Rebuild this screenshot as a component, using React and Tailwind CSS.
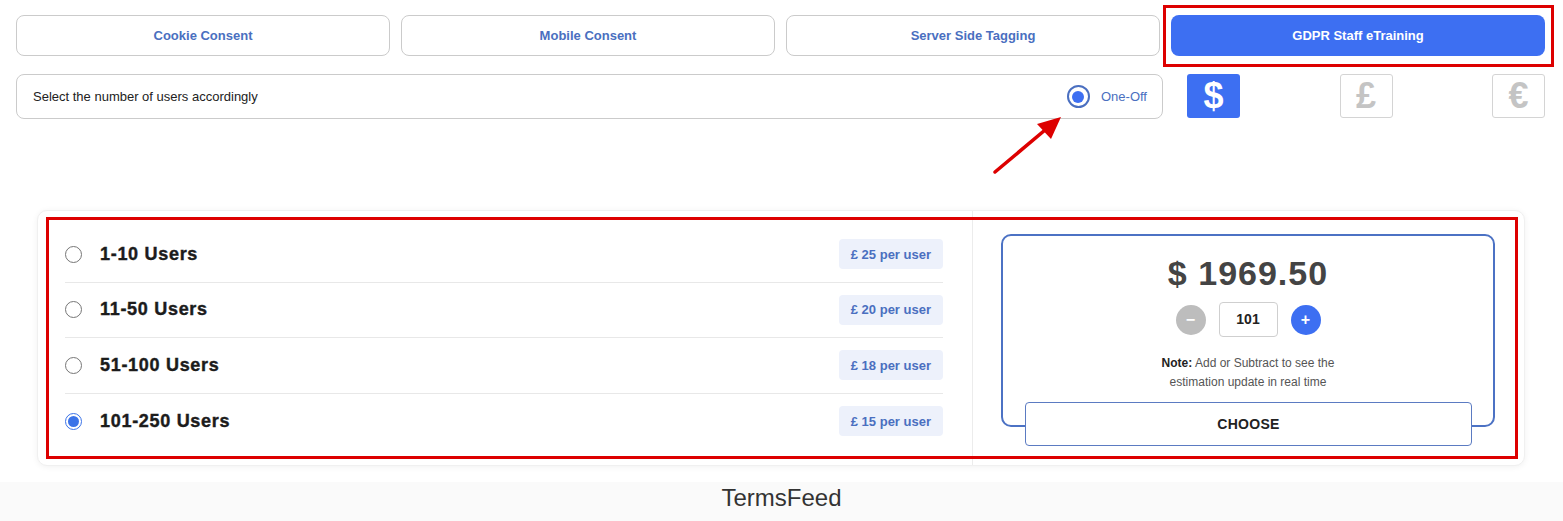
import React, { useState } from 'react';

const tabs = ['Cookie Consent', 'Mobile Consent', 'Server Side Tagging', 'GDPR Staff eTraining'];

const tiers = [
  { label: '1-10 Users', price: 25 },
  { label: '11-50 Users', price: 20 },
  { label: '51-100 Users', price: 18 },
  { label: '101-250 Users', price: 15 },
];

const Radio = ({ checked }) => (
  <span
    className={`flex h-[17px] w-[17px] items-center justify-center rounded-full border ${
      checked ? 'border-[#3b73e8]' : 'border-[#767676]'
    }`}
  >
    {checked && <span className="h-[11px] w-[11px] rounded-full bg-[#3b73e8]" />}
  </span>
);

const App = () => {
  const [selected, setSelected] = useState(3);
  const [qty, setQty] = useState(101);
  const total = (qty * 19.5).toFixed(2);

  return (
    <div className="relative min-h-[521px] bg-white font-['Liberation_Sans',Arial,sans-serif]">
      <div className="px-4 pt-[15px]">
        {/* tabs */}
        <div className="grid w-[1529px] grid-cols-4 gap-[11px]">
          {tabs.map((t, i) => (
            <div key={t} className="relative">
              <button
                className={`flex h-[41px] w-full items-center justify-center rounded-lg text-[13px] font-bold ${
                  i === 3
                    ? 'bg-[#3d6ff2] text-white'
                    : 'border border-[#cbcbcb] bg-white text-[#4a6fc0]'
                }`}
              >
                {t}
              </button>
              {i === 3 && (
                <div className="pointer-events-none absolute -bottom-[11px] -left-2 -right-[9px] -top-[10px] border-[3px] border-[#dd0000]" />
              )}
            </div>
          ))}
        </div>

        {/* users row + currencies */}
        <div className="mt-[18px] flex">
          <div className="flex h-[45px] w-[1147px] items-center justify-between rounded-lg border border-[#cbcbcb] pl-4 pr-[15px]">
            <span className="text-[13px] text-[#222]">Select the number of users accordingly</span>
            <label className="flex items-center gap-[11px]">
              <span className="flex h-[23px] w-[23px] items-center justify-center rounded-full border-2 border-[#4a6fc0]">
                <span className="h-[12px] w-[12px] rounded-full bg-[#3d6ff2]" />
              </span>
              <span className="text-[13px] text-[#4a6fc0]">One-Off</span>
            </label>
          </div>
          <div className="ml-[24px] flex flex-1 justify-between pr-[2px]">
            <div className="flex h-[44px] w-[53px] items-center justify-center rounded-[3px] bg-[#3d6ff2] text-[36px] font-bold text-white">
              $
            </div>
            <div className="flex h-[44px] w-[53px] items-center justify-center rounded-[3px] border border-[#d4d4d4] text-[36px] font-bold text-[#c4c4c4]">
              £
            </div>
            <div className="flex h-[44px] w-[53px] items-center justify-center rounded-[3px] border border-[#d4d4d4] text-[36px] font-bold text-[#c4c4c4]">
              €
            </div>
          </div>
        </div>
      </div>

      {/* annotation arrow */}
      <svg className="pointer-events-none absolute left-[985px] top-[110px]" width="90" height="70" viewBox="0 0 90 70">
        <line x1="10" y1="62" x2="66" y2="15" stroke="#dd0000" strokeWidth="3.5" strokeLinecap="round" />
        <polygon points="76,7 52,14 66,29" fill="#dd0000" />
      </svg>

      {/* pricing card */}
      <div className="relative mx-[37px] mr-[38px] mt-[91px] flex rounded-[10px] border border-[#f0f0f0] bg-white shadow-[0_1px_6px_rgba(0,0,0,0.06)]">
        <div className="w-[935px] border-r border-[#ececec] pb-[16px] pl-[27px] pr-[29px] pt-[16px]">
          {tiers.map((t, i) => (
            <div
              key={t.label}
              onClick={() => setSelected(i)}
              className={`flex h-[55.5px] cursor-pointer items-center justify-between ${
                i < tiers.length - 1 ? 'border-b border-[#e8e8e8]' : ''
              }`}
            >
              <div className="flex items-center gap-[18px]">
                <Radio checked={selected === i} />
                <span className="text-[18px] font-bold tracking-[0.7px] text-[#1c1c1c] [-webkit-text-stroke:0.4px_#1c1c1c]">
                  {t.label}
                </span>
              </div>
              <span className="flex h-[30px] items-center rounded-[4px] bg-[#edf1fb] px-3 text-[13px] font-bold text-[#4a6fc0]">
                £ {t.price} per user
              </span>
            </div>
          ))}
        </div>

        <div className="flex-1 pl-[28px] pr-[29px] pt-[23px]">
          <div className="relative flex h-[193px] flex-col items-center rounded-[10px] border-2 border-[#4c72c4] pt-[20px]">
            <div className="text-[34px] font-bold leading-none tracking-[1px] text-[#444]">$ {total}</div>
            <div className="mt-[12px] flex items-center gap-[13px]">
              <button
                onClick={() => setQty(Math.max(101, qty - 1))}
                className="flex h-[30px] w-[30px] items-center justify-center rounded-full bg-[#bdbdbd] text-[16px] font-bold text-white"
              >
                −
              </button>
              <div className="flex h-[35px] w-[59px] items-center justify-center rounded-[4px] border border-[#cfcfcf] text-[14px] font-bold text-[#222]">
                {qty}
              </div>
              <button
                onClick={() => setQty(Math.min(250, qty + 1))}
                className="flex h-[30px] w-[30px] items-center justify-center rounded-full bg-[#3d6ff2] text-[16px] font-bold text-white"
              >
                +
              </button>
            </div>
            <p className="mt-[17px] text-center text-[12px] leading-[19px] text-[#555]">
              <span className="font-bold text-[#222]">Note:</span> Add or Subtract to see the
              <br />
              estimation update in real time
            </p>
            <button className="absolute -bottom-[21px] left-[22px] right-[21px] flex h-[44px] items-center justify-center rounded-[4px] border border-[#5b7bc2] bg-white text-[14px] font-bold tracking-[0.3px] text-[#222]">
              CHOOSE
            </button>
          </div>
        </div>

        <div className="pointer-events-none absolute bottom-[6px] left-[8px] right-[6px] top-[6px] border-[3px] border-[#dd0000]" />
      </div>

      {/* footer */}
      <div className="mt-[16px] flex h-[39px] items-start justify-center bg-[#fafafa]">
        <span className="text-[24px] leading-[32px] text-[#333]">TermsFeed</span>
      </div>
    </div>
  );
};

export default App;
